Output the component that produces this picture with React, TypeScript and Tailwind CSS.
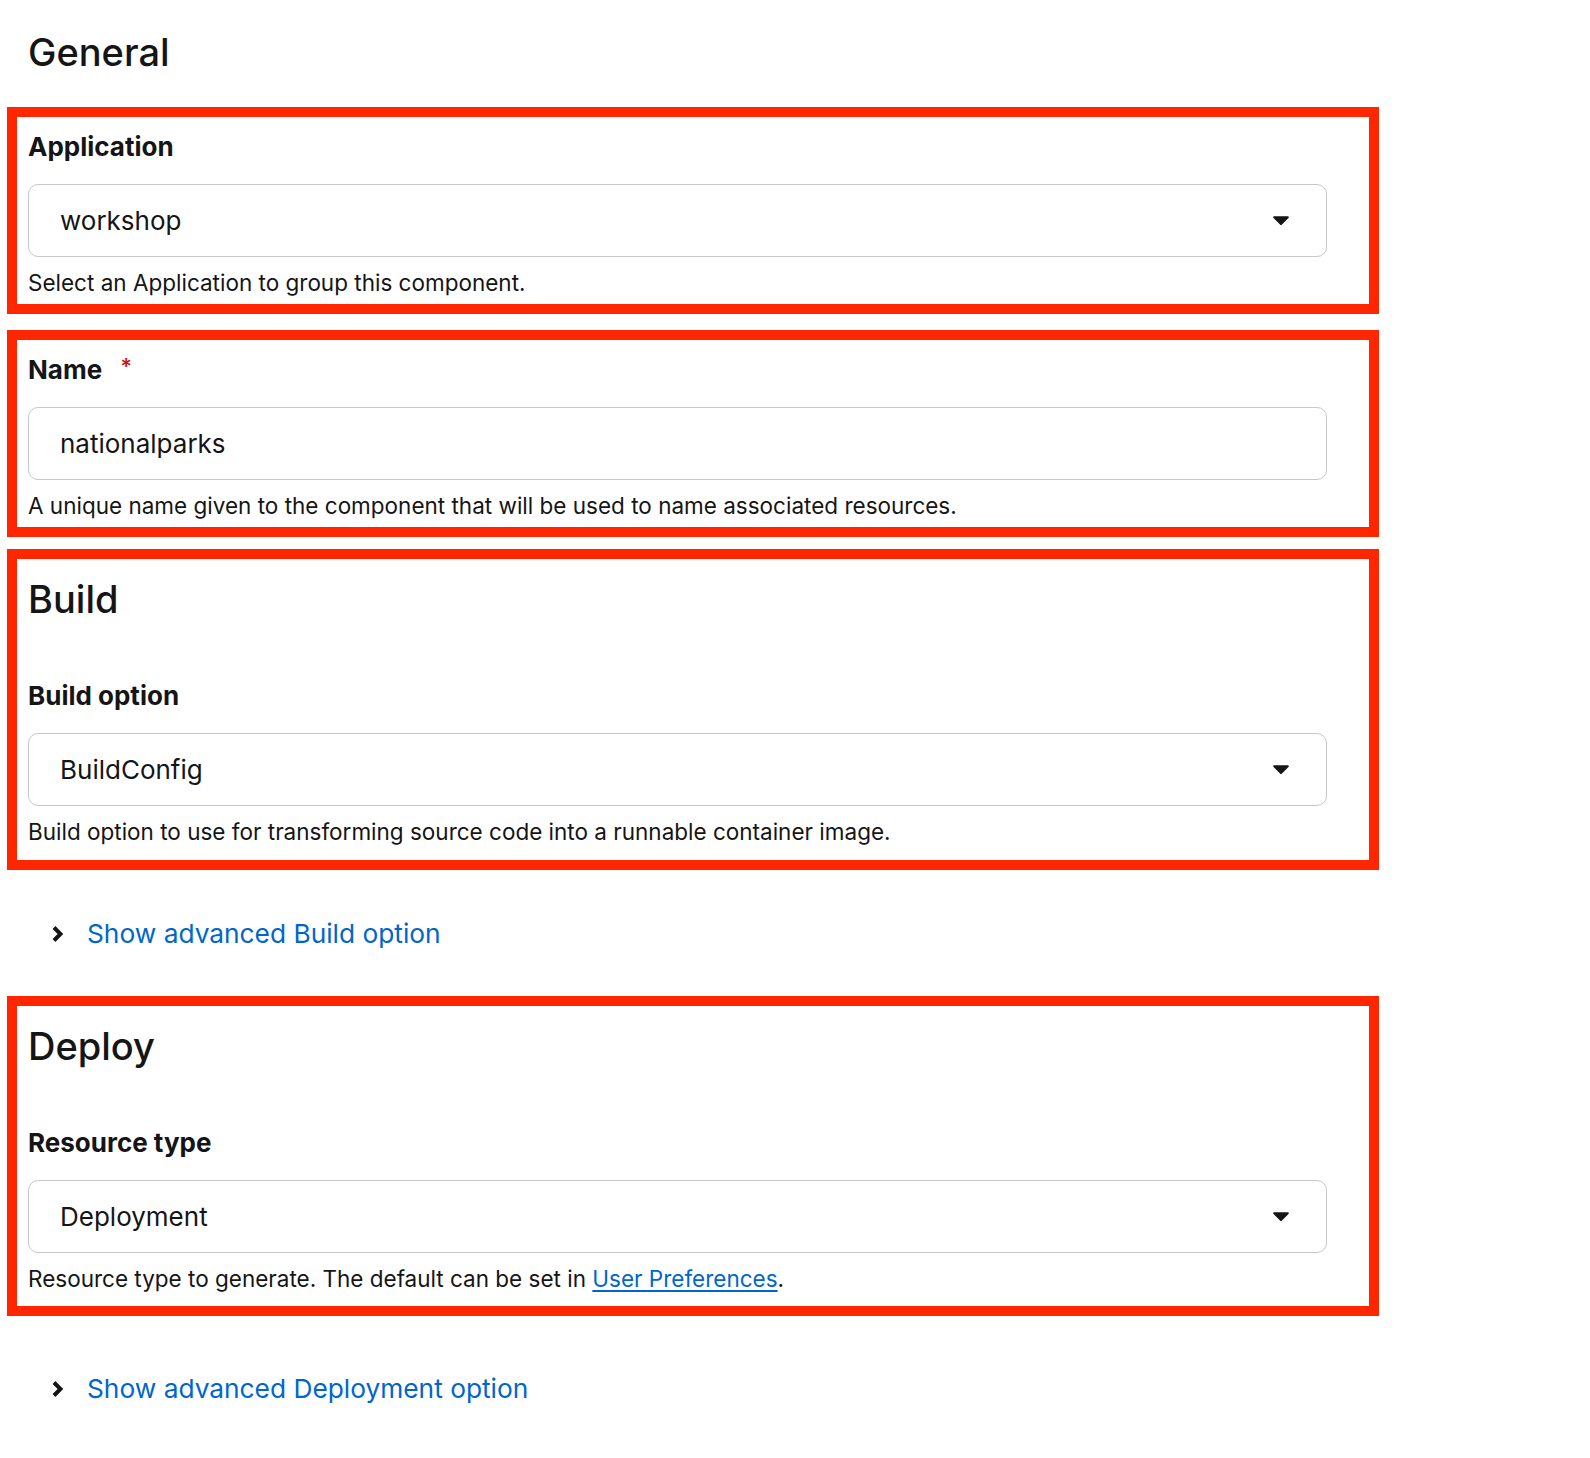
import type { ReactNode } from 'react';

const FONT = 'font-["Inter","Liberation_Sans",sans-serif]';

function Caret() {
  return (
    <svg viewBox="10 188 300 172" className="h-[9px] w-[16px]" fill="#151515">
      <path d="M31.3 192h257.3c17.8 0 26.7 21.5 14.1 34.1L174.1 354.8c-7.8 7.8-20.5 7.8-28.3 0L17.2 226.1C4.6 213.5 13.5 192 31.3 192z" />
    </svg>
  );
}

function Chevron() {
  return (
    <svg viewBox="0 0 11 16" className="h-[16px] w-[11px]" fill="none" stroke="#151515" strokeWidth="4">
      <polyline points="2,1.5 8.5,8 2,14.5" />
    </svg>
  );
}

function Label({ children, required }: { children: ReactNode; required?: boolean }) {
  return (
    <div className="flex items-start text-[26px] leading-[35px] font-bold">
      <span>{children}</span>
      {required && <span className="ml-[18px] text-[22px] leading-[28px] font-semibold text-[#c9190b]">*</span>}
    </div>
  );
}

function Field({ value, select }: { value: string; select?: boolean }) {
  return (
    <div className="mt-5 flex h-[73px] w-[1299px] items-center justify-between rounded-[10px] border-[1.5px] border-[#c7c7c7] pl-[31px] pr-[37px] text-[26px]">
      <span>{value}</span>
      {select && <Caret />}
    </div>
  );
}

function Help({ children }: { children: ReactNode }) {
  return <p className="mt-[10px] text-[22.5px] leading-[32px]">{children}</p>;
}

function Box({ children, className = '' }: { children: ReactNode; className?: string }) {
  return <div className={`border-[10px] border-[#ff2600] px-[11px] ${className}`}>{children}</div>;
}

function Expander({ label, className }: { label: string; className: string }) {
  return (
    <div className={`${className} flex items-center pl-[45px] text-[26.3px] leading-[36px]`}>
      <Chevron />
      <span className="ml-[24px] text-[#0066cc]">{label}</span>
    </div>
  );
}

export default function App() {
  return (
    <div className={`min-h-screen bg-white text-[#151515] ${FONT}`}>
      <div className="w-[1379px] pl-[7px] pt-[29px] pb-[50px]">
        <h2 className="pl-[21px] text-[38px] leading-[46px] font-medium">General</h2>

        <Box className="mt-[32px] pt-[12px] pb-[5px]">
          <Label>Application</Label>
          <Field value="workshop" select />
          <Help>Select an Application to group this component.</Help>
        </Box>

        <Box className="mt-4 pt-[12px] pb-[5px]">
          <Label required>Name</Label>
          <Field value="nationalparks" />
          <Help>A unique name given to the component that will be used to name associated resources.</Help>
        </Box>

        <Box className="mt-3 pt-[17px] pb-[12px]">
          <h2 className="text-[38px] leading-[46px] font-medium">Build</h2>
          <div className="mt-[56px]">
            <Label>Build option</Label>
          </div>
          <Field value="BuildConfig" select />
          <Help>Build option to use for transforming source code into a runnable container image.</Help>
        </Box>

        <Expander className="mt-[46px]" label="Show advanced Build option" />

        <Box className="mt-[44px] pt-[17px] pb-[11px]">
          <h2 className="text-[38px] leading-[46px] font-medium">Deploy</h2>
          <div className="mt-[56px]">
            <Label>Resource type</Label>
          </div>
          <Field value="Deployment" select />
          <Help>
            Resource type to generate. The default can be set in{' '}
            <a href="#" className="text-[#0066cc] underline underline-offset-[3px]">
              User Preferences
            </a>
            .
          </Help>
        </Box>

        <Expander className="mt-[55px]" label="Show advanced Deployment option" />
      </div>
    </div>
  );
}
